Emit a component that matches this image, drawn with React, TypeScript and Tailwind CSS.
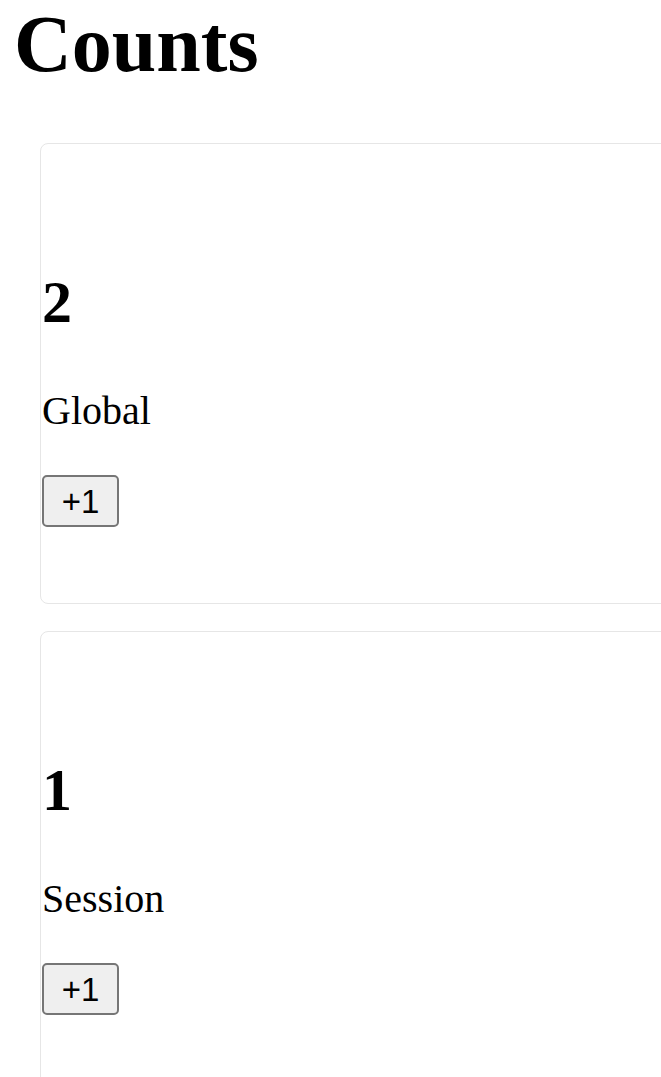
import { useState } from "react";

function CounterCard({ label, initial }: { label: string; initial: number }) {
  const [count, setCount] = useState(initial);

  return (
    <section className="ml-[40px] w-[700px] rounded-lg border border-[#e6e6e6] pb-[76px] pl-[1px]">
      <h2 className="mt-[125px] text-[60px] font-bold leading-[66px]">{count}</h2>
      <p className="mt-[53px] text-[40px] leading-[46px]">{label}</p>
      <button
        type="button"
        className="mt-[41px] flex h-[52px] w-[77px] items-center justify-center rounded-[5px] border-2 border-[#767676] bg-[#efefef] font-['Arial','Liberation_Sans',sans-serif] text-[33px] leading-none"
        onClick={() => setCount((value) => value + 1)}
      >
        +1
      </button>
    </section>
  );
}

export default function App() {
  return (
    <main className="min-h-screen w-full overflow-hidden bg-white font-['Times_New_Roman','Liberation_Serif',serif] text-black">
      <h1 className="pl-[14px] text-[80px] font-bold leading-[88px]">Counts</h1>
      <div className="mt-[55px] flex flex-col gap-[27px]">
        <CounterCard label="Global" initial={2} />
        <CounterCard label="Session" initial={1} />
      </div>
    </main>
  );
}
